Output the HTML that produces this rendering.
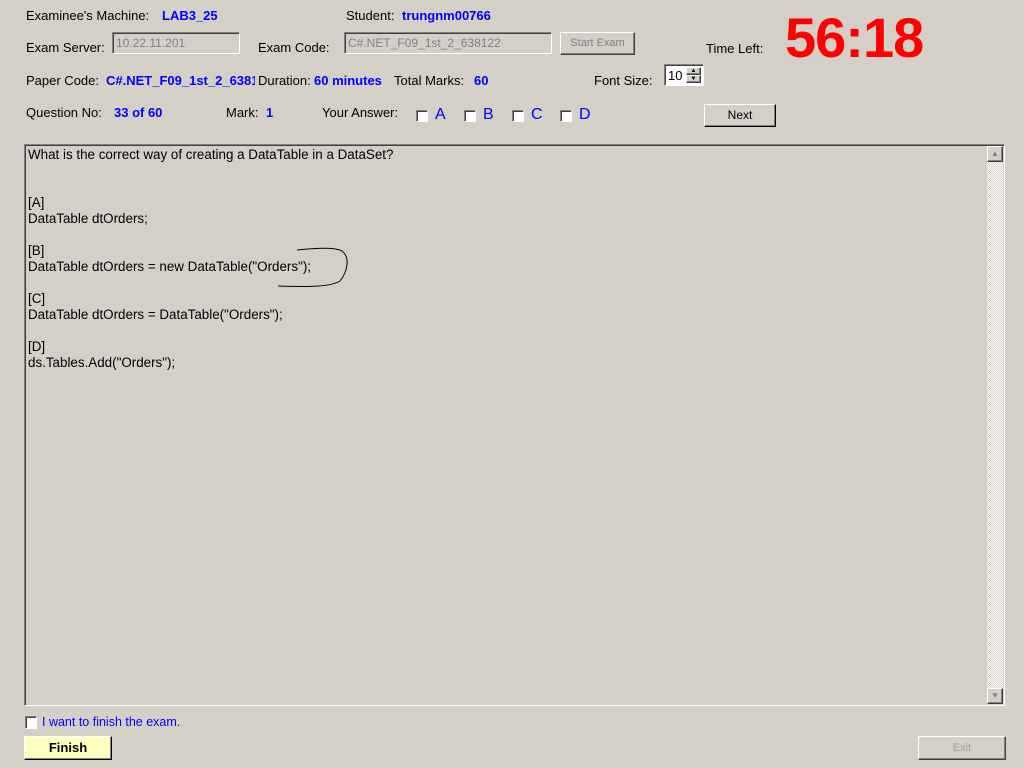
<!DOCTYPE html>
<html><head><style>
*{margin:0;padding:0;box-sizing:border-box}
body{width:1024px;height:768px;background:#d4d0c8;font-family:"Liberation Sans",Arial,sans-serif;font-size:13px;color:#000;position:relative;overflow:hidden}
.a{position:absolute;white-space:nowrap}
.b{color:#0000ff;font-weight:bold}
.in{position:absolute;height:22px;border-top:1px solid #808080;border-left:1px solid #808080;border-right:1px solid #fff;border-bottom:1px solid #fff;box-shadow:inset 1px 1px 0 #404040;color:#808080;padding:2px 3px;font-size:12px;line-height:16px}
.btn{position:absolute;border:1px solid;border-color:#fff #404040 #404040 #fff;box-shadow:inset -1px -1px 0 #808080;text-align:center;font-size:11px}
.cb{position:absolute;width:12px;height:12px;background:#fff;border:1px solid;border-color:#808080 #fff #fff #808080;box-shadow:inset 1px 1px 0 #404040}
.ans{position:absolute;color:#0000ff;font-size:16px}
</style></head><body>
<div class="a" style="left:26px;top:8px">Examinee's Machine:</div>
<div class="a b" style="left:162px;top:8px">LAB3_25</div>
<div class="a" style="left:346px;top:8px">Student:</div>
<div class="a b" style="left:402px;top:8px">trungnm00766</div>

<div class="a" style="left:26px;top:40px">Exam Server:</div>
<div class="in" style="left:112px;top:32px;width:128px">10.22.11.201</div>
<div class="a" style="left:258px;top:40px">Exam Code:</div>
<div class="in" style="left:344px;top:32px;width:208px">C#.NET_F09_1st_2_638122</div>
<div class="btn" style="left:560px;top:32px;width:75px;height:23px;line-height:20px;color:#808080">Start Exam</div>
<div class="a" style="left:706px;top:41px">Time Left:</div>
<div class="a" style="left:785px;top:6px;color:#ff0000;font-weight:bold;font-size:56px;line-height:64px;letter-spacing:-1px">56:18</div>

<div class="a" style="left:26px;top:73px">Paper Code:</div>
<div class="a b" style="left:106px;top:73px;width:149px;overflow:hidden">C#.NET_F09_1st_2_638122</div>
<div class="a" style="left:258px;top:73px">Duration:</div>
<div class="a b" style="left:314px;top:73px">60 minutes</div>
<div class="a" style="left:394px;top:73px">Total Marks:</div>
<div class="a b" style="left:474px;top:73px">60</div>
<div class="a" style="left:594px;top:73px">Font Size:</div>
<div style="position:absolute;left:664px;top:64px;width:40px;height:22px;background:#fff;border:1px solid;border-color:#808080 #fff #fff #808080;box-shadow:inset 1px 1px 0 #404040">
<span style="position:absolute;left:3px;top:3px;font-size:13px">10</span>
<div class="btn" style="left:21px;top:2px;width:15px;height:8px;background:#d4d0c8;font-size:6px;line-height:6px">▲</div>
<div class="btn" style="left:21px;top:10px;width:15px;height:8px;background:#d4d0c8;font-size:6px;line-height:6px">▼</div>
</div>

<div class="a" style="left:26px;top:105px">Question No:</div>
<div class="a b" style="left:114px;top:105px">33 of 60</div>
<div class="a" style="left:226px;top:105px">Mark:</div>
<div class="a b" style="left:266px;top:105px">1</div>
<div class="a" style="left:322px;top:105px">Your Answer:</div>
<div class="cb" style="left:416px;top:110px"></div><div class="ans" style="left:435px;top:106px">A</div>
<div class="cb" style="left:464px;top:110px"></div><div class="ans" style="left:483px;top:106px">B</div>
<div class="cb" style="left:512px;top:110px"></div><div class="ans" style="left:531px;top:106px">C</div>
<div class="cb" style="left:560px;top:110px"></div><div class="ans" style="left:579px;top:106px">D</div>
<div class="btn" style="left:704px;top:104px;width:72px;height:23px;line-height:20px;font-size:12px;border-color:#fff #000 #000 #fff">Next</div>

<div style="position:absolute;left:24px;top:144px;width:981px;height:562px;border:1px solid;border-color:#808080 #fff #fff #808080;box-shadow:inset 1px 1px 0 #404040"></div>
<div style="position:absolute;left:28px;top:147px;font-size:13.4px;line-height:16px;white-space:pre">What is the correct way of creating a DataTable in a DataSet?


[A]
DataTable dtOrders;

[B]
DataTable dtOrders = new DataTable("Orders");

[C]
DataTable dtOrders = DataTable("Orders");

[D]
ds.Tables.Add("Orders");</div>
<svg style="position:absolute;left:270px;top:245px" width="90" height="50"><path d="M27 5 C45 3 65 2 72 6 C80 12 78 26 70 36 C60 42 40 42 8 41" fill="none" stroke="#000" stroke-width="1"/></svg>

<div style="position:absolute;left:987px;top:146px;width:16px;height:558px;background:repeating-conic-gradient(#d4d0c8 0 25%,#fff 0 50%) 0 0/2px 2px"></div>
<div class="btn" style="left:987px;top:146px;width:16px;height:16px;background:#d4d0c8;font-size:8px;line-height:13px;color:#808080">▲</div>
<div class="btn" style="left:987px;top:688px;width:16px;height:16px;background:#d4d0c8;font-size:8px;line-height:13px;color:#808080">▼</div>

<div class="cb" style="left:25px;top:716px;height:13px"></div>
<div class="a" style="left:42px;top:715px;color:#0000ff;font-size:12.5px">I want to finish the exam.</div>
<div class="btn" style="left:24px;top:736px;width:88px;height:24px;background:#ffffc0;line-height:22px;font-size:13px;font-weight:bold;border-color:#fff #000 #000 #fff">Finish</div>
<div class="btn" style="left:918px;top:736px;width:88px;height:24px;line-height:22px;color:#a0a0a0">Exit</div>
</body></html>
